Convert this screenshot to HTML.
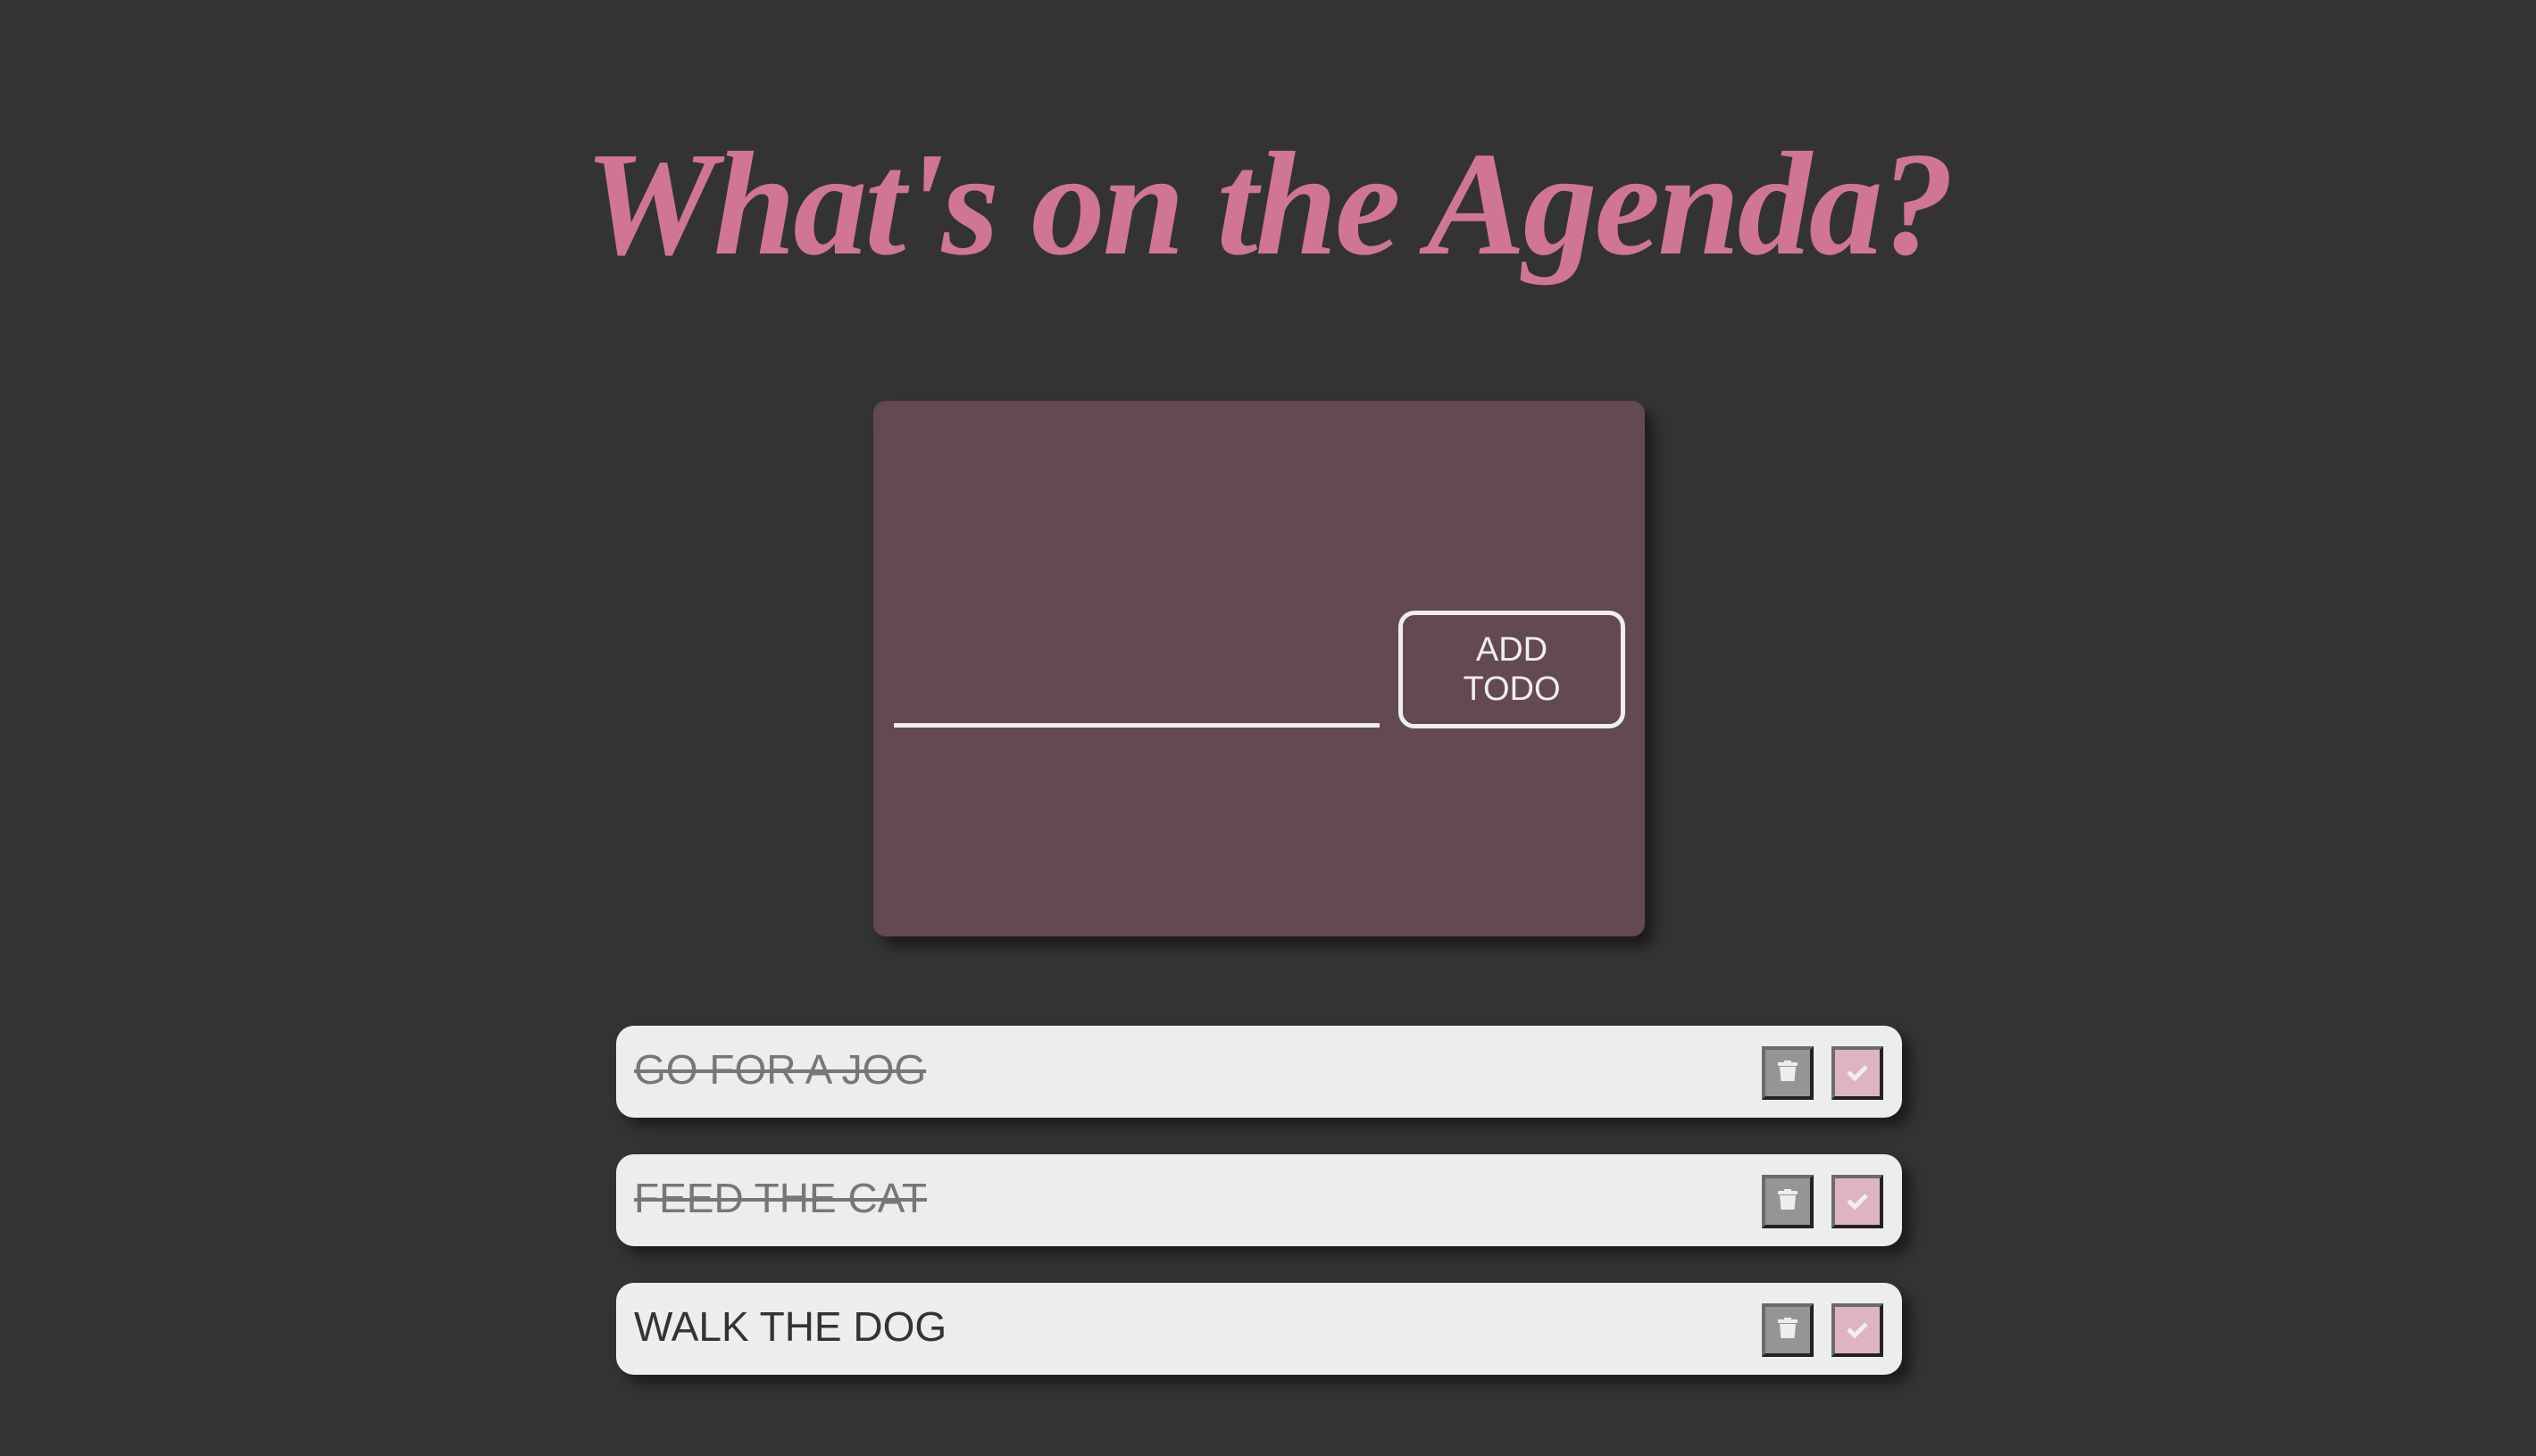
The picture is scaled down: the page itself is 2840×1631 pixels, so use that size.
<!DOCTYPE html>
<html><head><meta charset="utf-8"><style>
html,body{margin:0;padding:0;width:2840px;height:1631px;background:#333;overflow:hidden;font-family:"Liberation Sans",sans-serif}
.title{position:absolute;left:0;width:2840px;top:128px;text-align:center;color:#d07693;font-family:"Liberation Serif",serif;font-style:italic;font-weight:bold;font-size:166px;line-height:200px;letter-spacing:-3px}
.card{position:absolute;left:978px;top:449px;width:864px;height:600px;background:#634952;border-radius:14px;box-shadow:10px 12px 14px rgba(0,0,0,.45)}
.line{position:absolute;left:1001px;top:810px;width:544px;height:5px;background:#eee}
.btn{position:absolute;left:1566px;top:684px;width:244px;height:122px;border:5px solid #eee;border-radius:18px;color:#eee;font-size:38px;line-height:44px;text-align:center;display:flex;align-items:center;justify-content:center}
.item{position:absolute;left:690px;width:1440px;height:103px;background:#ededed;border-radius:20px;box-shadow:10px 10px 14px rgba(0,0,0,.45)}
.item .t{position:absolute;left:20px;top:-2px;line-height:103px;font-size:46px;color:#333}
.item .t.done{color:#777;text-decoration:line-through}
.b{position:absolute;top:23px;width:50px;height:52px;border:4px solid;border-color:#6b6b6b #222 #222 #6b6b6b}
.tr{left:1283px;background:#959595}
.ck{left:1361px;background:#deb3c2}
</style></head><body>
<div class="title">What's on the Agenda?</div>
<div class="card"></div>
<div class="line"></div>
<div class="btn">ADD<br>TODO</div>

<div class="item" style="top:1149px"><div class="t done">GO FOR A JOG</div>
<div class="b tr"><svg width="50" height="52" viewBox="0 0 50 52"><rect x="14" y="14" width="22" height="4" rx="1" fill="#eee"/><rect x="21" y="12" width="8" height="3" fill="#eee"/><path d="M16 19h18l-1.5 16h-15z" fill="#eee"/></svg></div>
<div class="b ck"><svg width="50" height="52" viewBox="0 0 50 52"><path d="M15 25l7 7 13-13" stroke="#eee" stroke-width="5" fill="none"/></svg></div></div>

<div class="item" style="top:1293px"><div class="t done">FEED THE CAT</div>
<div class="b tr"><svg width="50" height="52" viewBox="0 0 50 52"><rect x="14" y="14" width="22" height="4" rx="1" fill="#eee"/><rect x="21" y="12" width="8" height="3" fill="#eee"/><path d="M16 19h18l-1.5 16h-15z" fill="#eee"/></svg></div>
<div class="b ck"><svg width="50" height="52" viewBox="0 0 50 52"><path d="M15 25l7 7 13-13" stroke="#eee" stroke-width="5" fill="none"/></svg></div></div>

<div class="item" style="top:1437px"><div class="t">WALK THE DOG</div>
<div class="b tr"><svg width="50" height="52" viewBox="0 0 50 52"><rect x="14" y="14" width="22" height="4" rx="1" fill="#eee"/><rect x="21" y="12" width="8" height="3" fill="#eee"/><path d="M16 19h18l-1.5 16h-15z" fill="#eee"/></svg></div>
<div class="b ck"><svg width="50" height="52" viewBox="0 0 50 52"><path d="M15 25l7 7 13-13" stroke="#eee" stroke-width="5" fill="none"/></svg></div></div>
</body></html>
